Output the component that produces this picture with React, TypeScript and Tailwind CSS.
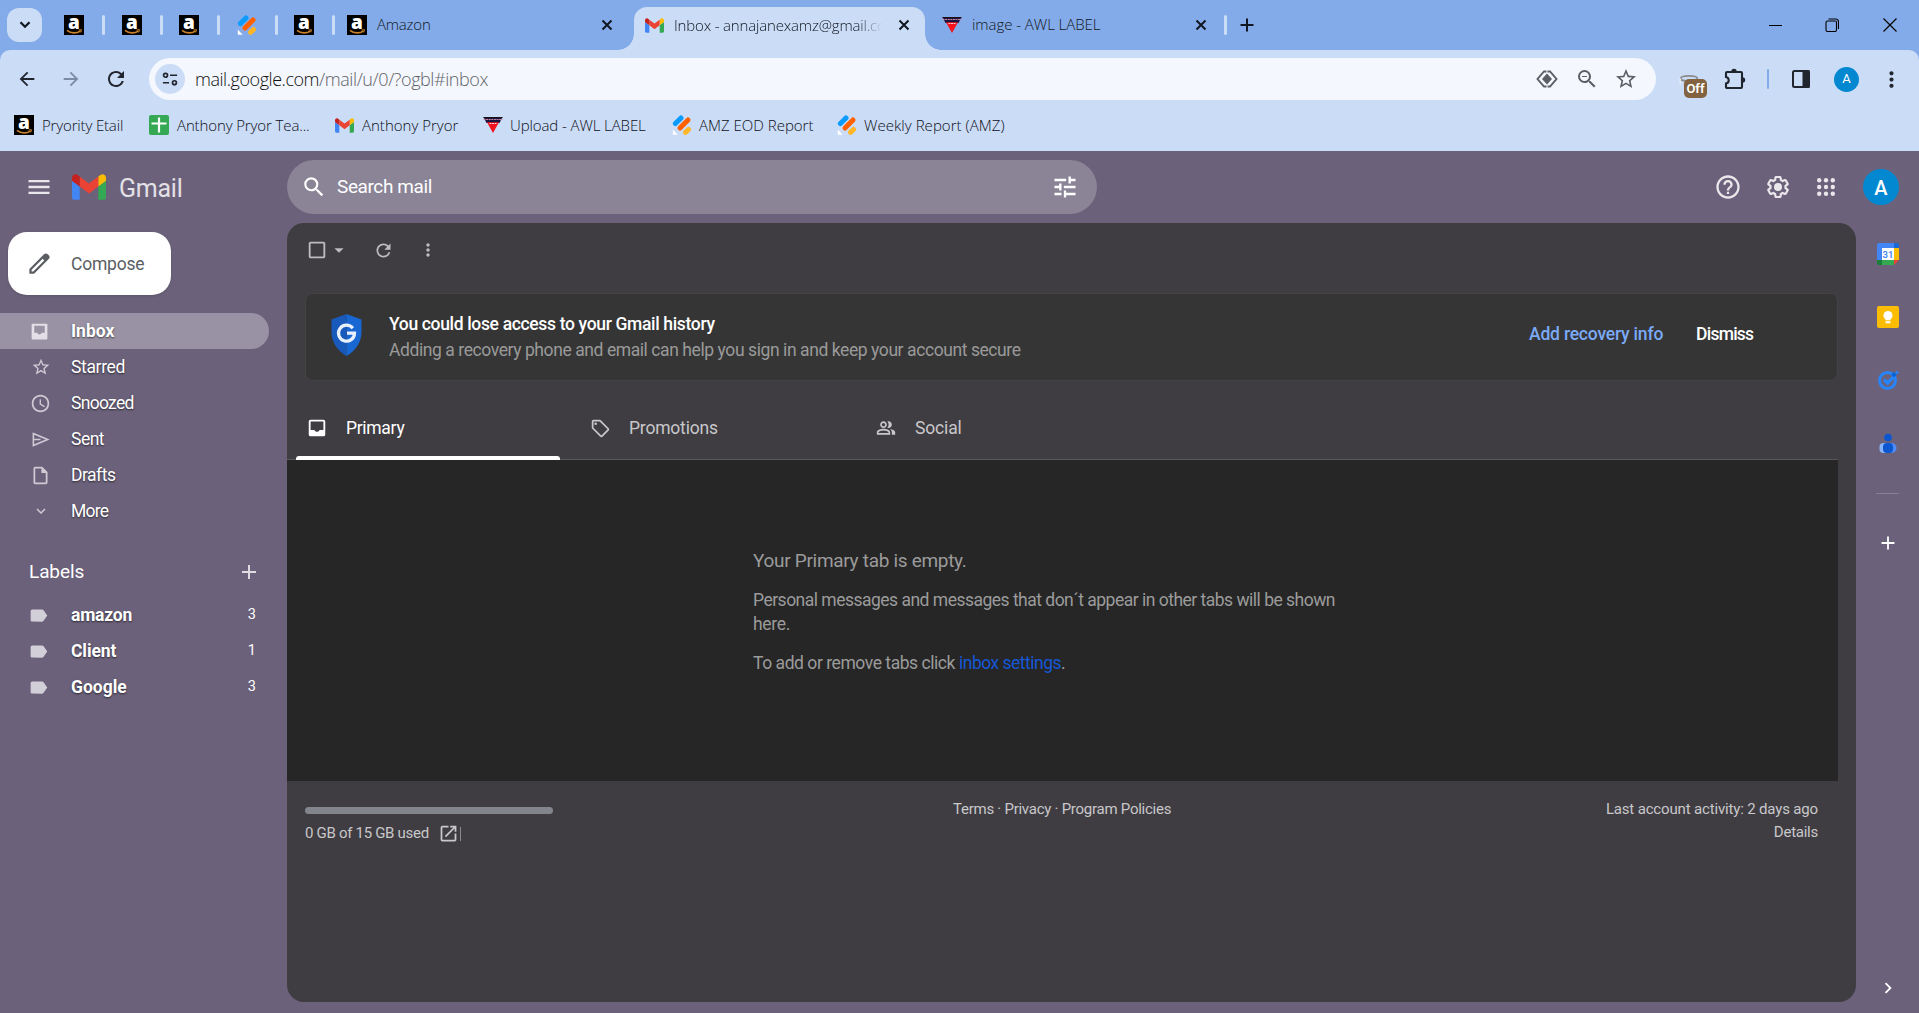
import type { ReactNode } from "react";
import {
  MdMenu, MdSearch, MdTune, MdHelpOutline, MdStarBorder, MdAccessTime,
  MdOutlineInsertDriveFile, MdExpandMore, MdLabel, MdAdd, MdRefresh, MdMoreVert, MdCheckBoxOutlineBlank,
  MdArrowDropDown, MdOutlinePeopleAlt, MdOutlineLocalOffer, MdOpenInNew, MdKeyboardArrowRight,
  MdArrowBack, MdArrowForward, MdZoomOut,
} from "react-icons/md";

const ui = "font-['Open_Sans',sans-serif] font-light whitespace-nowrap";
const gs = "font-[Roboto,sans-serif] whitespace-nowrap";

function T({ c, children }: { c: string; children: ReactNode }) {
  return <span className={"inline-block " + c}>{children}</span>;
}

function Amazon() {
  return (
    <svg viewBox="0 0 20 20" className="size-5 shrink-0 overflow-visible">
      <rect width="20" height="20" fill="#000" />
      <text x="10" y="13.6" textAnchor="middle" fontSize="19" fontWeight="800" fontFamily="Open Sans, sans-serif" fill="#fff">a</text>
      <path d="M3 15.400c4 3.200 10 3.200 13.500.400" stroke="#c9822b" strokeWidth="1.600" fill="none" />
      <path d="M14.500 15l3-.300-.800 2.800" stroke="#c9822b" strokeWidth="1" fill="none" />
    </svg>
  );
}
function Jot() {
  return (
    <svg viewBox="0 0 20 20" className="size-5 shrink-0" strokeLinecap="round">
      <path d="M3.400 8.600L9 3" stroke="#0a9bff" strokeWidth="5" />
      <path d="M8 13L16 5" stroke="#ff6100" strokeWidth="5" />
      <path d="M13.500 17.300L16.500 14.500" stroke="#ffb629" strokeWidth="5" />
      <path d="M.8 14.600v4.600c0 .4.3.6.6.6h4.200z" fill="#fff" />
    </svg>
  );
}
function Awl() {
  return (
    <svg viewBox="0 0 20 20" className="size-5 shrink-0">
      <path d="M.5 2h19L16.500 8h-13z" fill="#1c1440" />
      <path d="M.5 2.500h19" stroke="#1c1014" strokeWidth="1" />
      <path d="M.5 4.500h19" stroke="#c9869f" strokeWidth="1.200" strokeDasharray="2 .6" />
      <path d="M4 7.300h12L10 18z" fill="#f3121d" />
      <path d="M6.500 8.500h7" stroke="#ffd5d5" strokeWidth="1.200" strokeDasharray="2 .6" />
    </svg>
  );
}
function GmailLogo({ c }: { c: string }) {
  return (
    <svg viewBox="52 42 88 66" className={"shrink-0 " + c}>
      <path fill="#4285f4" d="M58 108h14V74L52 59v43c0 3.320 2.690 6 6 6" />
      <path fill="#34a853" d="M120 108h14c3.320 0 6-2.690 6-6V59l-20 15" />
      <path fill="#fbbc04" d="M120 48v26l20-15v-8c0-7.420-8.470-11.650-14.400-7.200" />
      <path fill="#ea4335" d="M72 74V48l24 18 24-18v26L96 92" />
      <path fill="#c5221f" d="M52 51v8l20 15V48l-5.600-4.200c-5.940-4.450-14.400-.220-14.400 7.200" />
    </svg>
  );
}
function GreenPlus() {
  return (
    <svg viewBox="0 0 20 20" className="size-5 shrink-0">
      <rect width="20" height="20" rx="2" fill="#34a853" />
      <path d="M10 2.500v15M2.500 8.500h15" stroke="#fff" strokeWidth="2.200" />
    </svg>
  );
}
function Inbox({ c }: { c: string }) {
  return (
    <svg viewBox="0 0 24 24" className={"shrink-0 " + c} fill="currentColor" fillRule="evenodd">
      <path d="M5 3h14a2 2 0 0 1 2 2v14a2 2 0 0 1-2 2H5a2 2 0 0 1-2-2V5a2 2 0 0 1 2-2zM5 5v9.200h4.200c.5 1.200 1.500 2 2.800 2s2.300-.8 2.800-2H19V5z" />
    </svg>
  );
}
function NavInbox({ c }: { c: string }) {
  return (
    <svg viewBox="0 0 24 24" className={"shrink-0 " + c} fill="currentColor" fillRule="evenodd">
      <path d="M4 3h16a1 1 0 0 1 1 1v16a1 1 0 0 1-1 1H4a1 1 0 0 1-1-1V4a1 1 0 0 1 1-1zM6 5.500v8h3.500c.5 1.200 1.300 2 2.500 2s2-.8 2.500-2H18v-8z" />
    </svg>
  );
}
function Send({ className }: { className: string }) {
  return <svg viewBox="0 0 24 24" className={className} fill="none" stroke="currentColor" strokeWidth="2"><path d="M3 4.500L21 12 3 19.500zM3 12h9" /></svg>;
}
function Cross({ c }: { c: string }) {
  return <svg viewBox="0 0 12 12" className={"size-3 shrink-0 " + c} fill="none" stroke="currentColor" strokeWidth="2"><path d="M1.500 1.500l9 9M10.500 1.500l-9 9" /></svg>;
}
function Gear() {
  return (
    <svg viewBox="0 0 24 24" className="size-[26px] shrink-0" fill="currentColor">
      <path d="M13.85 22.25h-3.7c-.74 0-1.36-.54-1.45-1.27l-.27-1.89c-.27-.14-.53-.29-.79-.46l-1.8.72c-.7.26-1.47-.03-1.81-.65L2.2 15.53c-.35-.66-.2-1.44.36-1.88l1.53-1.19c-.01-.15-.02-.3-.02-.46 0-.15.01-.31.02-.46l-1.52-1.19c-.59-.45-.74-1.26-.37-1.88l1.85-3.19c.34-.62 1.11-.9 1.79-.63l1.81.73c.26-.17.52-.32.78-.46l.27-1.91c.09-.7.71-1.25 1.44-1.25h3.7c.74 0 1.36.54 1.45 1.27l.27 1.89c.27.14.53.29.79.46l1.8-.72c.71-.26 1.48.03 1.82.65l1.84 3.18c.36.66.2 1.44-.36 1.88l-1.52 1.19c.01.15.02.3.02.46s-.01.31-.02.46l1.52 1.19c.56.45.72 1.23.37 1.86l-1.86 3.22c-.34.62-1.11.9-1.8.63l-1.8-.72c-.26.17-.52.32-.78.46l-.27 1.91c-.1.68-.72 1.22-1.46 1.22zm-3.23-2h2.76l.37-2.55.53-.22c.44-.18.88-.44 1.34-.78l.45-.34 2.38.96 1.38-2.4-2.03-1.58.07-.56c.03-.26.06-.51.06-.78s-.03-.53-.06-.78l-.07-.56 2.03-1.58-1.39-2.4-2.39.96-.45-.35c-.42-.32-.87-.58-1.33-.77l-.52-.22-.37-2.55h-2.76l-.37 2.55-.53.21c-.44.19-.88.44-1.34.79l-.45.33-2.38-.95-1.39 2.39 2.03 1.58-.07.56a7 7 0 0 0-.06.79c0 .26.02.53.06.78l.07.56-2.03 1.58 1.38 2.4 2.39-.96.45.35c.43.33.86.58 1.33.77l.53.22.38 2.55z" />
      <circle cx="12" cy="12" r="3.7" />
    </svg>
  );
}
const Sep = ({ c = "" }: { c?: string }) => <i className={"h-5 w-[3px] shrink-0 rounded-full bg-[#cbdcf6] " + c} />;

function TabStrip() {
  return (
    <div className="flex h-[50px] items-center bg-[#84abe9] text-[#111620]">
      <div className="ml-[7px] flex h-[34px] w-[35px] items-center justify-center rounded-xl bg-[#cbdcf6]">
        <svg viewBox="0 0 12 8" className="h-2 w-3" fill="none" stroke="currentColor" strokeWidth="2.200"><path d="M1.500 1.200L6 5.800l4.500-4.600" /></svg>
      </div>
      <div className="ml-[22px] flex items-center gap-[18px]">
        <Amazon /><Sep c="-mr-[1px]" /><Amazon /><Sep c="-mr-[2px]" /><Amazon /><Sep c="-mr-[1px]" /><Jot /><Sep c="-mr-[2px]" /><Amazon /><Sep />
      </div>
      <div className="ml-[12px] flex w-[278px] items-center">
        <Amazon />
        <T c={ui + " -mt-0.5 ml-[10px] text-[15px] tracking-[-0.2px]"}>Amazon</T>
        <Cross c="ml-auto mr-[12px]" />
      </div>
      <div className="relative ml-[9px] mt-[7px] flex h-[43px] w-[291px] items-center rounded-t-[13px] bg-[#cbdcf6] pb-[7px]">
        <i className="absolute -left-4 bottom-0 size-4 bg-[radial-gradient(circle_at_0_0,transparent_15.5px,#cbdcf6_16px)]" />
        <i className="absolute -right-4 bottom-0 size-4 bg-[radial-gradient(circle_at_100%_0,transparent_15.5px,#cbdcf6_16px)]" />
        <GmailLogo c="ml-[11px] h-[15px] w-[19px]" />
        <div className="-mt-px ml-[10px] w-[208px] overflow-hidden [mask-image:linear-gradient(90deg,#000_88%,transparent)]">
          <T c={ui + " text-[15px] tracking-[-0.17px]"}>Inbox - annajanexamz@gmail.com</T>
        </div>
        <Cross c="ml-auto mr-[15px]" />
      </div>
      <div className="ml-[17px] flex w-[265px] items-center">
        <Awl />
        <T c={ui + " -mt-0.5 ml-[10px] text-[15px] tracking-[-0.05px]"}>image - AWL LABEL</T>
        <Cross c="ml-auto" />
      </div>
      <Sep c="ml-[17px]" />
      <svg viewBox="0 0 14 14" className="ml-[13px] size-[14px]" stroke="currentColor" strokeWidth="2"><path d="M7 .5v13M.5 7h13" /></svg>
      <div className="ml-auto flex items-center text-black">
        <i className="mr-[43px] h-px w-[13px] bg-black" />
        <svg viewBox="0 0 14 14" className="mr-[44px] size-[14px]" fill="none" stroke="currentColor" strokeWidth="1.100">
          <rect x="1" y="3" width="10.500" height="10.500" rx="1.500" /><path d="M3.500 1h7A3 3 0 0 1 13.500 4v7" />
        </svg>
        <svg viewBox="0 0 14 14" className="mr-[22px] size-[14px]" fill="none" stroke="currentColor" strokeWidth="1.200"><path d="M.5.5l13 13M13.500.5l-13 13" /></svg>
      </div>
    </div>
  );
}

function Toolbar() {
  return (
    <div className="bg-[#84abe9]">
      <div className="flex h-[58px] items-center rounded-t-[10px] bg-[#cbdcf6] text-[#20252e]">
        <MdArrowBack className="ml-[16px] size-[22px]" />
        <MdArrowForward className="ml-[22px] size-[22px] text-[#7d8aa3]" />
        <MdRefresh className="ml-[22px] size-[24px]" />
        <div className="ml-[21px] flex h-[42px] w-[1507px] items-center rounded-full bg-[#f4f7fd]">
          <div className="ml-[6px] flex size-[30px] items-center justify-center rounded-full bg-[#cbdcf6]">
            <svg viewBox="0 0 18 18" className="size-4" fill="none" stroke="currentColor" strokeWidth="1.900">
              <circle cx="4" cy="4.800" r="2.200" /><path d="M9 4.800h8M1 13.200h7" /><circle cx="14" cy="13.200" r="2.200" />
            </svg>
          </div>
          <T c={ui + " ml-[10px] mt-px text-[18px] tracking-[-0.46px] text-[#111]"}>mail.google.com</T>
          <T c={ui + " mt-px text-[18px] tracking-[-0.42px] text-[#5f6368]"}>/mail/u/0/?ogbl#inbox</T>
          <div className="ml-auto flex items-center text-[#5b5e63]">
            <svg viewBox="0 0 22 18" className="mr-[17px] h-[18px] w-[22px]" fill="none" stroke="currentColor" strokeWidth="1.900">
              <path d="M10.500 1.500H8L1.500 9 8 16.500h2.500M11.500 1.500H14L20.500 9 14 16.500h-2.500" /><path d="M11 3.500L16 9l-5 5.500L6 9z" fill="currentColor" stroke="none" />
            </svg>
            <MdZoomOut className="mr-[15px] size-[24px]" />
            <MdStarBorder className="mr-[18px] size-[24px]" />
          </div>
        </div>
        <div className="relative ml-[22px] h-[30px] w-[30px]">
          <svg viewBox="0 0 24 16" className="mt-[10px] h-[14px] w-[22px]" fill="none" stroke="#f1f1f1" strokeWidth="2"><ellipse cx="12" cy="5" rx="9.500" ry="3" stroke="#8b8b8b" /><path d="M2 5v7" strokeDasharray="2 1" /></svg>
          <span className={gs + " absolute left-[6px] top-[15px] flex h-[19px] w-[23px] items-center justify-center rounded-[5px] bg-[#82623f] text-[13px] font-semibold text-white"}>Off</span>
        </div>
        <svg viewBox="0 0 22 22" className="ml-[16px] size-[22px]" fill="none" stroke="currentColor" strokeWidth="2.100">
          <path d="M3 4h14a1 1 0 0 1 1 1v14a1 1 0 0 1-1 1H3a1 1 0 0 1-1-1v-3.500a3.300 3.300 0 0 0 0-6.500V5a1 1 0 0 1 1-1z" /><path d="M7.300 3.500a2.700 2.700 0 0 1 5.400 0zM18.500 9.300a2.700 2.700 0 0 1 0 5.400z" fill="currentColor" stroke="none" />
        </svg>
        <i className="ml-[21px] h-5 w-[2px] rounded bg-[#84abe9]" />
        <svg viewBox="0 0 18 18" className="ml-[23px] size-[18px]" fill="none" stroke="currentColor" strokeWidth="2"><rect x="1" y="1" width="16" height="16" rx="1.500" /><path d="M11.500 1h5v16h-5z" fill="currentColor" /></svg>
        <span className={gs + " ml-[24px] flex size-[25px] items-center justify-center rounded-full bg-[#0288d1] text-[13px] text-white"}>A</span>
        <MdMoreVert className="ml-[20px] size-[25px]" />
      </div>
      <div className={ui + " flex h-[43px] items-center bg-[#cbdcf6] pb-[9px] pl-[14px] text-[15px] text-[#0b0f18]"}>
        <div className="mr-[8px]"><Amazon /></div><div className="w-[107px]"><T c="tracking-[-0.16px]">Pryority Etail</T></div>
        <div className="mr-[8px]"><GreenPlus /></div><div className="w-[158px]"><T c="tracking-[-0.12px]">Anthony Pryor Tea...</T></div>
        <GmailLogo c="mr-[8px] h-[15px] w-[19px]" /><div className="w-[121px]"><T c="">Anthony Pryor</T></div>
        <div className="mr-[7px]"><Awl /></div><div className="w-[162px]"><T c="tracking-[-0.1px]">Upload - AWL LABEL</T></div>
        <div className="mr-[7px]"><Jot /></div><div className="w-[138px]"><T c="">AMZ EOD Report</T></div>
        <div className="mr-[7px]"><Jot /></div><T c="tracking-[0.05px]">Weekly Report (AMZ)</T>
      </div>
    </div>
  );
}

function GmailHeader() {
  return (
    <div className="flex h-[72px] items-center text-[#e9e7eb]">
      <MdMenu className="ml-[25px] size-[28px]" />
      <GmailLogo c="ml-[19px] h-[26px] w-[34px]" />
      <div className="ml-[13px] w-[168px]"><T c={gs + " mt-1 text-[25px] tracking-[-0.25px] text-[#e3e1e6]"}>Gmail</T></div>
      <div className="flex h-[54px] w-[810px] items-center rounded-full bg-[#8a8496] text-white">
        <MdSearch className="ml-[14px] size-[26px]" />
        <T c={gs + " ml-[10px] text-[19px] tracking-[-0.4px]"}>Search mail</T>
        <MdTune className="ml-auto mr-[18px] size-[28px]" />
      </div>
      <MdHelpOutline className="ml-auto size-[28px]" />
      <div className="ml-[23px]"><Gear /></div>
      <svg viewBox="0 0 18 18" className="ml-[26px] size-[18px]" fill="currentColor">
        {[2.2, 9, 15.8].map((y) => [2.2, 9, 15.8].map((x) => <circle key={x + "-" + y} cx={x} cy={y} r="2.200" />))}
      </svg>
      <span className={gs + " ml-[28px] mr-[20px] flex size-9 items-center justify-center rounded-full bg-[#0288d1] pt-px text-[20px] font-medium text-white"}>A</span>
    </div>
  );
}

const nav = [
  { n: "Starred", t: "tracking-[-0.35px]", I: MdStarBorder, s: "size-[20px]" },
  { n: "Snoozed", t: "tracking-[-0.7px]", I: MdAccessTime, s: "size-[21px]" },
  { n: "Sent", t: "tracking-[-0.5px]", I: Send, s: "size-[19px]" },
  { n: "Drafts", t: "tracking-[-0.5px]", I: MdOutlineInsertDriveFile, s: "size-[21px]" },
  { n: "More", t: "tracking-[-0.75px]", I: MdExpandMore, s: "size-[18px]" },
];
const labels = [
  { n: "amazon", t: "tracking-[-0.2px]", c: 3 },
  { n: "Client", t: "tracking-[-0.1px]", c: 1 },
  { n: "Google", t: "tracking-[0px]", c: 3 },
];
const shadow = " [text-shadow:0_1px_2px_rgba(0,0,0,.6)] ";

function Sidebar() {
  return (
    <div className={gs + " w-[287px] text-[17.5px] text-white"}>
      <div className="ml-[8px] mt-[9px] flex h-[63px] w-[163px] items-center rounded-[19px] bg-white text-[#5a5e63] shadow">
        <svg viewBox="0 0 24 24" className="ml-[18px] mr-[18px] size-[27px]" fill="currentColor"><path d="M20.410 4.940l-1.350-1.350c-.780-.780-2.050-.780-2.830 0L3 16.820V21h4.180L20.410 7.770c.790-.780.790-2.050 0-2.830zm-14 14.120L5 19v-1.360l9.820-9.820 1.410 1.410-9.820 9.830z" /></svg>
        <T c="mt-px tracking-[-0.2px]">Compose</T>
      </div>
      <div className="mt-[18px] flex h-9 w-[269px] items-center rounded-r-full bg-[#9992a4] pl-[29px]">
        <NavInbox c="mr-[21px] size-[21px] text-[#e2dfe6]" /><T c={"font-bold" + shadow}>Inbox</T>
      </div>
      {nav.map(({ n, t, I, s }) => (
        <div key={n} className="flex h-9 items-center pl-[30px]">
          <div className="mr-[20px] flex w-[21px] justify-center text-[#cfcbd5]"><I className={s} /></div>
          <T c={shadow + t}>{n}</T>
        </div>
      ))}
      <div className="mt-[25px] flex h-[36px] items-center pl-[29px]">
        <T c="text-[19px] tracking-[-0.1px]">Labels</T>
        <MdAdd className="ml-auto mr-[26px] size-[24px] text-[#dedce2]" />
      </div>
      <div className="h-[7px]" />
      {labels.map(({ n, t, c }) => (
        <div key={n} className="flex h-9 items-center pl-[28px]">
          <MdLabel className="mr-[22px] size-[21px] text-[#d3cfd8]" />
          <T c={"font-bold" + shadow + t}>{n}</T>
          <span className="ml-auto mr-[31px] text-[14.5px]">{c}</span>
        </div>
      ))}
    </div>
  );
}

function Panel() {
  return (
    <div className={gs + " flex h-[779px] w-[1569px] flex-col rounded-[17px] bg-[#3f3d42] text-[17.5px] text-[#c8c7ca]"}>
      <div className="flex h-[54px] shrink-0 items-center pl-[19px] text-[#bdbcbe]">
        <MdCheckBoxOutlineBlank className="size-[22px]" />
        <MdArrowDropDown className="size-[22px]" />
        <MdRefresh className="ml-[23px] size-[21px]" />
        <MdMoreVert className="ml-[24px] size-[20px]" />
      </div>
      <div className="ml-[18px] mt-[16px] flex h-[88px] w-[1533px] shrink-0 items-center rounded-lg border border-[#434344] bg-[#353535]">
        <svg viewBox="0 0 32 42" className="mb-[4px] ml-[24px] h-[42px] w-[33px]">
          <path d="M16 0L1 5.500V18c0 10 6 19 15 24z" fill="#185abc" /><path d="M16 0l15 5.500V18c0 10-6 19-15 24z" fill="#1967d2" />
          <path d="M22.300 14.200A8 8 0 1 0 24 19.200h-7.500" fill="none" stroke="#e8f0fe" strokeWidth="3.200" />
        </svg>
        <div className="ml-[26px] flex flex-col gap-[5px] leading-[21px]">
          <T c="font-medium tracking-[-0.34px] text-white">You could lose access to your Gmail history</T>
          <T c="tracking-[-0.42px] text-[#9a9a9a]">Adding a recovery phone and email can help you sign in and keep your account secure</T>
        </div>
        <div className="ml-auto w-[167px] pb-[5px]"><T c="font-medium tracking-[-0.2px] text-[#7baaf7]">Add recovery info</T></div>
        <div className="w-[141px] pb-[5px]"><T c="font-medium tracking-[-0.75px] text-white">Dismiss</T></div>
      </div>
      <div className="flex h-[79px] w-[1551px] shrink-0 border-b border-[#58575b] pt-[16px]">
        <div className="relative flex h-[62px] w-[285px] items-center pl-[19px] text-white"><Inbox c="mr-[18px] size-[22px]" /><T c="tracking-[-0.3px]">Primary</T>
          <i className="absolute bottom-[-1px] left-[9px] h-[4px] w-[264px] rounded-t-[3px] bg-white" /></div>
        <div className="flex h-[62px] w-[285px] items-center"><MdOutlineLocalOffer className="ml-[18px] mr-[18px] size-[21px]" /><T c="tracking-[-0.2px]">Promotions</T></div>
        <div className="flex h-[62px] items-center"><MdOutlinePeopleAlt className="ml-[19px] mr-[19px] size-[20px]" /><T c="tracking-[-0.15px]">Social</T></div>
      </div>
      <div className="h-[321px] w-[1551px] shrink-0 bg-[#262626] pl-[466px] pt-[88px] text-[#9b9b9b]">
        <div className="text-[19px] leading-[26px]"><T c="tracking-[-0.3px]">Your Primary tab is empty.</T></div>
        <div className="mt-[14px] leading-[24px]"><T c="tracking-[-0.51px]">Personal messages and messages that don´t appear in other tabs will be shown</T><br /><T c="tracking-[-0.32px]">here.</T></div>
        <div className="mt-[15px] leading-[24px]"><T c="mr-[4px] tracking-[-0.45px]">To add or remove tabs click</T><T c="tracking-[-0.51px] text-[#1558d6]">inbox settings</T>.</div>
      </div>
      <div className="flex w-[1551px] pl-[18px] pr-[20px] pt-[17px] text-[15px] leading-[23px]">
        <div className="w-[248px] pt-[9px]">
          <div className="h-[7px] rounded-full bg-[#82868c]" />
          <div className="mt-[8px] flex items-center"><T c="mr-[9px] tracking-[-0.3px]">0 GB of 15 GB used</T><MdOpenInNew className="size-[21px]" /><i className="ml-[1px] h-[14px] w-px bg-[#8a8a8c]" /></div>
        </div>
        <T c="ml-[400px] tracking-[-0.26px]">Terms · Privacy · Program Policies</T>
        <div className="ml-auto text-right"><T c="tracking-[-0.16px]">Last account activity: 2 days ago</T><br /><T c="tracking-[-0.25px]">Details</T></div>
      </div>
    </div>
  );
}

function Rail() {
  return (
    <div className="flex flex-1 flex-col items-center text-white">
      <svg viewBox="0 0 22 22" className="mt-[20px] size-[22px]">
        <path d="M2 0h15v5H5v12H0V2a2 2 0 0 1 2-2z" fill="#4285f4" /><path d="M17 0h3a2 2 0 0 1 2 2v3h-5z" fill="#1967d2" /><path d="M17 5h5v12h-5z" fill="#fbbc04" />
        <path d="M5 17h12v5H5z" fill="#34a853" /><path d="M0 17h5v5H2a2 2 0 0 1-2-2z" fill="#188038" /><path d="M17 17h5l-5 5z" fill="#ea4335" /><path d="M5 5h12v12H5z" fill="#fff" />
        <text x="11" y="14.500" textAnchor="middle" fontSize="9.500" fontWeight="600" fontFamily="Roboto, sans-serif" fill="#4285f4">31</text>
      </svg>
      <svg viewBox="0 0 22 22" className="mt-[41px] size-[22px]"><rect width="22" height="22" rx="2" fill="#fbbc04" /><circle cx="11" cy="9.500" r="4.500" fill="#fff" /><path d="M8.500 12h5v2.300h-5zM8.500 15.300h5v2h-5z" fill="#fff" /></svg>
      <svg viewBox="0 0 22 22" className="mt-[41px] size-[22px]" fill="none"><circle cx="10.500" cy="11.500" r="8" stroke="#2684fc" strokeWidth="3" /><path d="M7 10.500l3.500 3.500 6-6" stroke="#2684fc" strokeWidth="3.400" /><path d="M17 3.500l2.200 2.200L17 7.900l-2.200-2.200z" fill="#0066da" stroke="#0066da" /><circle cx="20" cy="3.500" r="1.600" fill="#2684fc" /></svg>
      <svg viewBox="0 0 22 22" className="mt-[41px] size-[22px]"><rect x="2.500" y="11" width="11" height="10" rx="4" fill="#8ab4f8" /><rect x="8.500" y="11" width="11" height="10" rx="5" fill="#4f8df9" /><rect x="6" y="11" width="10" height="10" rx="4" fill="#0b57d0" /><circle cx="11" cy="5.500" r="3.800" fill="#0b57d0" /></svg>
      <i className="mt-[39px] h-px w-[23px] bg-[#877f93]" />
      <MdAdd className="mt-[38px] size-[22px]" />
      <MdKeyboardArrowRight className="mt-auto mb-[14px] size-[22px]" />
    </div>
  );
}

export default function App() {
  return (
    <div className="flex h-[1013px] w-[1919px] flex-col overflow-hidden bg-[#6b617a]">
      <TabStrip />
      <Toolbar />
      <GmailHeader />
      <div className="flex flex-1">
        <Sidebar />
        <Panel />
        <Rail />
      </div>
    </div>
  );
}
